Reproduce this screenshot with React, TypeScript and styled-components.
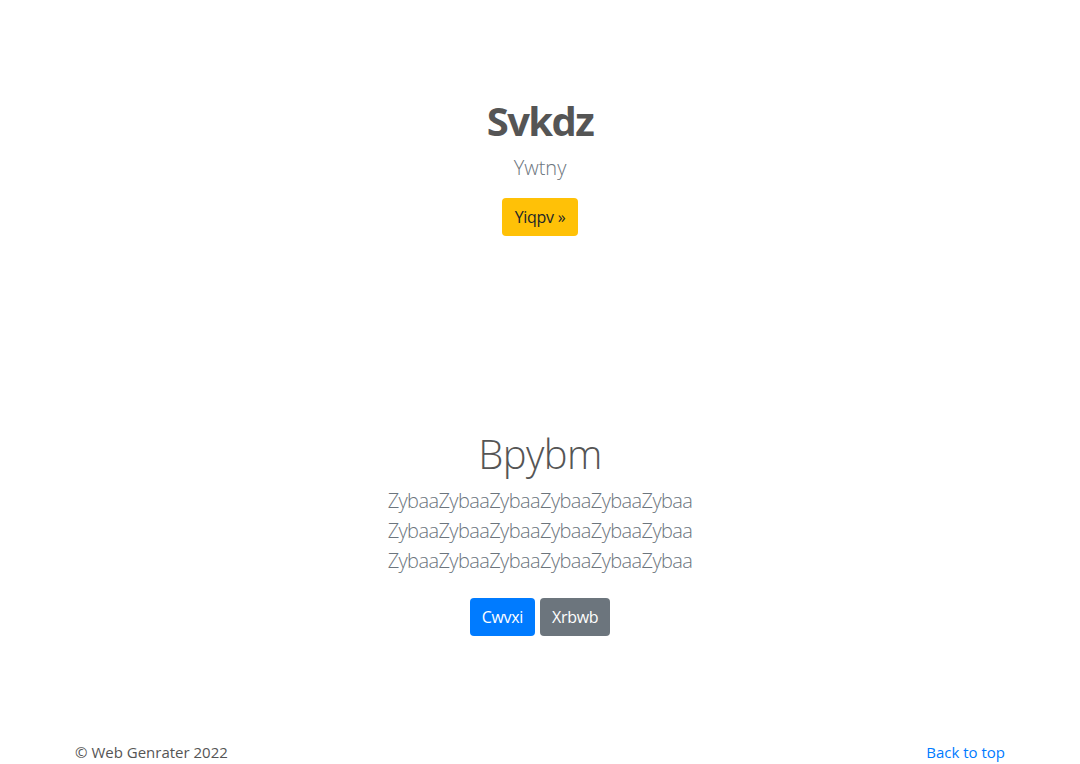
import React from "react";
import styled, { createGlobalStyle } from "styled-components";

const Global = createGlobalStyle`
  html, body { margin: 0; padding: 0; background: #fff; }
  body {
    font-family: "Segoe UI", "Open Sans", "Noto Sans", sans-serif;
    font-size: 16px;
    line-height: 1.5;
    color: #212529;
  }
  * { box-sizing: border-box; }
`;

const Page = styled.div`
  display: flex;
  flex-direction: column;
  min-height: 764px;
`;

const Hero = styled.section`
  display: flex;
  flex-direction: column;
  align-items: center;
  text-align: center;
  padding-top: 97px;
`;

const HeroTitle = styled.h1`
  margin: 0 0 8px;
  font-size: 40px;
  line-height: 48px;
  font-weight: 700;
  letter-spacing: -1.6px;
  color: #555;
`;

const Lead = styled.p`
  margin: 0 0 15px;
  font-size: 20px;
  line-height: 30px;
  font-weight: 300;
  color: #6c757d;
`;

const Button = styled.a<{ $variant: "warning" | "primary" | "secondary" }>`
  display: inline-flex;
  align-items: center;
  justify-content: center;
  height: 38px;
  padding: 0 ${(p) => (p.$variant === "warning" ? 13 : 12)}px;
  border-radius: 4px;
  font-size: 16px;
  letter-spacing: -0.3px;
  text-decoration: none;
  cursor: pointer;
  background: ${(p) =>
    p.$variant === "warning" ? "#ffc107" : p.$variant === "primary" ? "#007bff" : "#6c757d"};
  color: ${(p) => (p.$variant === "warning" ? "#212529" : "#fff")};
`;

const Album = styled.section`
  display: flex;
  flex-direction: column;
  align-items: center;
  text-align: center;
  padding-top: 194px;
`;

const AlbumTitle = styled.h2`
  margin: 0 0 8px;
  font-size: 40px;
  line-height: 48px;
  font-weight: 300;
  letter-spacing: -0.6px;
  color: #555;
`;

const AlbumText = styled.div`
  display: flex;
  flex-direction: column;
  align-items: center;
  margin: 0 0 22px;
`;

const AlbumLine = styled.span`
  font-size: 20px;
  line-height: 30px;
  font-weight: 300;
  letter-spacing: -0.6px;
  white-space: nowrap;
  color: #6c757d;
`;

const ButtonRow = styled.div`
  display: flex;
  gap: 5px;
  justify-content: center;
`;

const Footer = styled.footer`
  margin-top: auto;
  width: 960px;
  align-self: center;
  padding: 0 15px;
  display: flex;
  justify-content: space-between;
  align-items: center;
  height: 24px;
`;

const Copy = styled.span`
  font-size: 15px;
  color: #555;
`;

const TopLink = styled.a`
  font-size: 15px;
  color: #007bff;
  text-decoration: none;
`;

const line = "ZybaaZybaaZybaaZybaaZybaaZybaa";

export default function App() {
  return (
    <Page>
      <Global />
      <Hero>
        <HeroTitle>Svkdz</HeroTitle>
        <Lead>Ywtny</Lead>
        <Button $variant="warning">Yiqpv »</Button>
      </Hero>
      <Album>
        <AlbumTitle>Bpybm</AlbumTitle>
        <AlbumText>
          <AlbumLine>{line}</AlbumLine>
          <AlbumLine>{line}</AlbumLine>
          <AlbumLine>{line}</AlbumLine>
        </AlbumText>
        <ButtonRow>
          <Button $variant="primary">Cwvxi</Button>
          <Button $variant="secondary">Xrbwb</Button>
        </ButtonRow>
      </Album>
      <Footer>
        <Copy>© Web Genrater 2022</Copy>
        <TopLink href="#">Back to top</TopLink>
      </Footer>
    </Page>
  );
}
